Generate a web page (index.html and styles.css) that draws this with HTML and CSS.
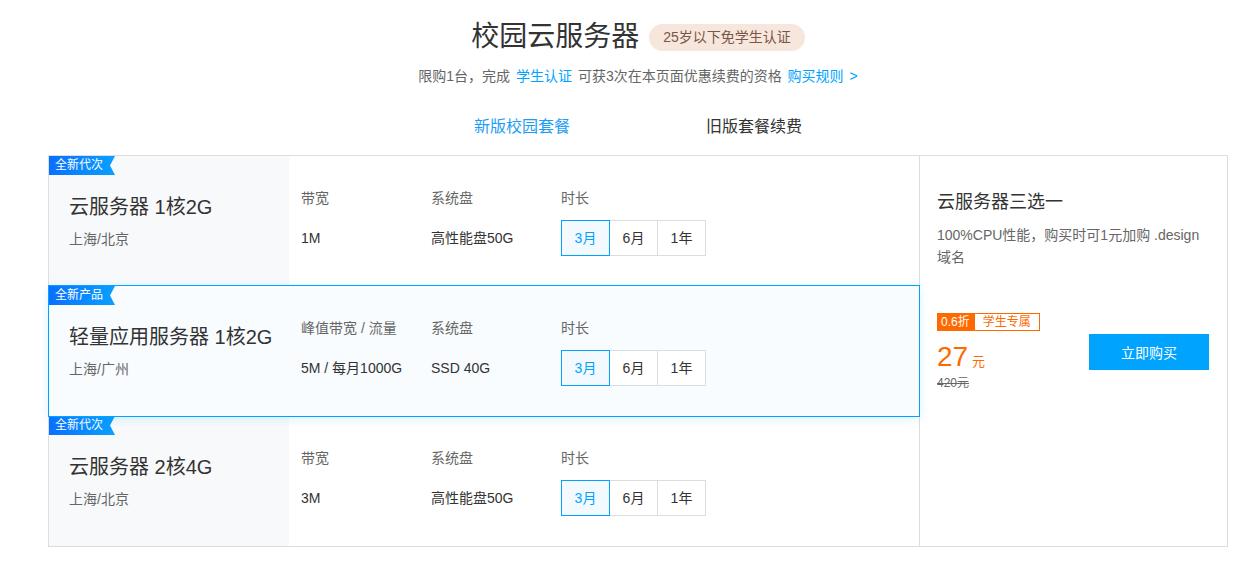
FILE: index.html
```html
<!DOCTYPE html>
<html lang="zh-CN">
<head>
<meta charset="utf-8">
<title>校园云服务器</title>
<link rel="stylesheet" href="styles.css">
</head>
<body>
<div class="page">
  <header class="hero">
    <div class="hero-title">
      <h1>校园云服务器</h1>
      <span class="age-badge">25岁以下免学生认证</span>
    </div>
    <p class="hero-sub">限购1台，完成 <a class="link">学生认证</a> 可获3次在本页面优惠续费的资格 <a class="link">购买规则 &gt;</a></p>
  </header>

  <nav class="tabs">
    <span class="tab active">新版校园套餐</span>
    <span class="tab">旧版套餐续费</span>
  </nav>

  <section class="panel">
    <div class="plans">
      <div class="plan">
        <span class="plan-tag">全新代次</span>
        <div class="plan-name">
          <div class="name">云服务器 1核2G</div>
          <div class="region">上海/北京</div>
        </div>
        <div class="plan-specs">
          <div class="spec">
            <div class="spec-label">带宽</div>
            <div class="spec-value">1M</div>
          </div>
          <div class="spec">
            <div class="spec-label">系统盘</div>
            <div class="spec-value">高性能盘50G</div>
          </div>
          <div class="spec">
            <div class="spec-label">时长</div>
            <div class="durations">
              <span class="dur selected">3月</span><span class="dur">6月</span><span class="dur">1年</span>
            </div>
          </div>
        </div>
      </div>

      <div class="plan active">
        <span class="plan-tag">全新产品</span>
        <div class="plan-name">
          <div class="name">轻量应用服务器 1核2G</div>
          <div class="region">上海/广州</div>
        </div>
        <div class="plan-specs">
          <div class="spec">
            <div class="spec-label">峰值带宽 / 流量</div>
            <div class="spec-value">5M / 每月1000G</div>
          </div>
          <div class="spec">
            <div class="spec-label">系统盘</div>
            <div class="spec-value">SSD 40G</div>
          </div>
          <div class="spec">
            <div class="spec-label">时长</div>
            <div class="durations">
              <span class="dur selected">3月</span><span class="dur">6月</span><span class="dur">1年</span>
            </div>
          </div>
        </div>
      </div>

      <div class="plan">
        <span class="plan-tag">全新代次</span>
        <div class="plan-name">
          <div class="name">云服务器 2核4G</div>
          <div class="region">上海/北京</div>
        </div>
        <div class="plan-specs">
          <div class="spec">
            <div class="spec-label">带宽</div>
            <div class="spec-value">3M</div>
          </div>
          <div class="spec">
            <div class="spec-label">系统盘</div>
            <div class="spec-value">高性能盘50G</div>
          </div>
          <div class="spec">
            <div class="spec-label">时长</div>
            <div class="durations">
              <span class="dur selected">3月</span><span class="dur">6月</span><span class="dur">1年</span>
            </div>
          </div>
        </div>
      </div>
    </div>

    <aside class="summary">
      <h2 class="summary-title">云服务器三选一</h2>
      <p class="summary-desc">100%CPU性能，购买时可1元加购 .design 域名</p>
      <div class="buy">
        <div class="price-block">
          <div class="discount"><span class="off">0.6折</span><span class="student">学生专属</span></div>
          <div class="price"><span class="num">27</span> <span class="unit">元</span></div>
          <div class="orig">420元</div>
        </div>
        <button class="buy-btn">立即购买</button>
      </div>
    </aside>
  </section>
</div>
</body>
</html>
```

FILE: styles.css
```css
* { box-sizing: border-box; }

body {
  margin: 0;
  background: #fff;
  color: #333;
  font-family: "Liberation Sans", "Noto Sans CJK SC", sans-serif;
  font-size: 14px;
}

.page {
  width: 1180px;
  margin-left: 48px;
}

.hero {
  padding-top: 17px;
  text-align: center;
}

.hero-title {
  display: flex;
  justify-content: center;
  align-items: center;
  gap: 10px;
  height: 40px;
}

.hero-title h1 {
  margin: 0;
  font-size: 28px;
  font-weight: normal;
  line-height: 40px;
  color: #333;
}

.age-badge {
  display: inline-block;
  height: 27px;
  line-height: 27px;
  padding: 0 14px;
  border-radius: 14px;
  background: #f7e6dc;
  color: #7a5648;
  font-size: 14px;
}

.hero-sub {
  margin: 9px 0 0;
  line-height: 20px;
  font-size: 14px;
  color: #666;
  word-spacing: 2px;
}

.link {
  color: #00a4ff;
  text-decoration: none;
}

.tabs {
  display: flex;
  justify-content: center;
  margin-top: 21px;
  padding: 8px 0;
  height: 48px;
}

.tab {
  width: 232px;
  text-align: center;
  font-size: 16px;
  line-height: 24px;
  color: #333;
}

.tab.active {
  color: #1c9cf4;
}

.panel {
  display: flex;
  border: 1px solid #ddd;
}

.plans {
  width: 871px;
  border-right: 1px solid #ddd;
}

.plan {
  position: relative;
  display: flex;
  height: 130px;
  background: #fff;
}

.plan.active {
  z-index: 1;
  background: #f8fcff;
  box-shadow: 0 0 0 1px #00a4ff, 0 2px 10px rgba(0, 164, 255, 0.18);
}

.plan-tag {
  position: absolute;
  top: 0;
  left: 0;
  height: 19px;
  padding: 0 12px 0 6px;
  line-height: 19px;
  font-size: 12px;
  color: #fff;
  background: linear-gradient(90deg, #0a6fff, #0aa0ff);
  clip-path: polygon(0 0, 100% 0, calc(100% - 5px) 50%, 100% 100%, 0 100%);
}

.plan-name {
  flex-shrink: 0;
  width: 240px;
  padding: 37px 0 0 20px;
  background: #f8f9fb;
  white-space: nowrap;
}

.plan.active .plan-name {
  background: transparent;
}

.name {
  font-size: 20px;
  line-height: 28px;
  color: #333;
}

.region {
  margin-top: 8px;
  font-size: 14px;
  line-height: 20px;
  color: #666;
}

.plan-specs {
  display: flex;
  padding: 32px 0 0 12px;
}

.spec {
  width: 130px;
  flex-shrink: 0;
  white-space: nowrap;
}

.spec-label {
  font-size: 14px;
  line-height: 20px;
  color: #666;
}

.spec-value {
  margin-top: 12px;
  font-size: 14px;
  line-height: 36px;
  color: #333;
}

.durations {
  display: flex;
  margin-top: 12px;
}

.dur {
  flex-shrink: 0;
  width: 49px;
  height: 36px;
  line-height: 34px;
  text-align: center;
  border: 1px solid #ddd;
  background: #fff;
  color: #333;
  font-size: 14px;
}

.dur + .dur {
  margin-left: -1px;
}

.dur.selected {
  position: relative;
  border-color: #00a4ff;
  background: #f3faff;
  color: #00a4ff;
}

.summary {
  width: 307px;
  padding: 33px 18px 0 17px;
}

.summary-title {
  margin: 0;
  font-size: 18px;
  font-weight: normal;
  line-height: 26px;
  color: #333;
}

.summary-desc {
  margin: 9px 0 0;
  font-size: 14px;
  line-height: 22px;
  color: #666;
}

.buy {
  display: flex;
  justify-content: space-between;
  align-items: center;
  margin-top: 45px;
}

.discount {
  display: flex;
  height: 18px;
  font-size: 12px;
  line-height: 16px;
}

.off {
  padding: 0 3px;
  border: 1px solid #ff6a00;
  background: #ff6a00;
  color: #fff;
}

.student {
  padding: 0 8px;
  border: 1px solid #ff6a00;
  color: #ff6a00;
}

.price {
  height: 44px;
  padding-top: 10px;
  line-height: 32px;
  color: #ff6a00;
  white-space: nowrap;
}

.price .num {
  font-size: 28px;
}

.price .unit {
  font-size: 13px;
}

.orig {
  font-size: 12px;
  line-height: 16px;
  color: #666;
  text-decoration: line-through;
}

.buy-btn {
  width: 120px;
  height: 36px;
  border: 0;
  background: #00a4ff;
  color: #fff;
  font-family: inherit;
  font-size: 14px;
  cursor: pointer;
}
```
